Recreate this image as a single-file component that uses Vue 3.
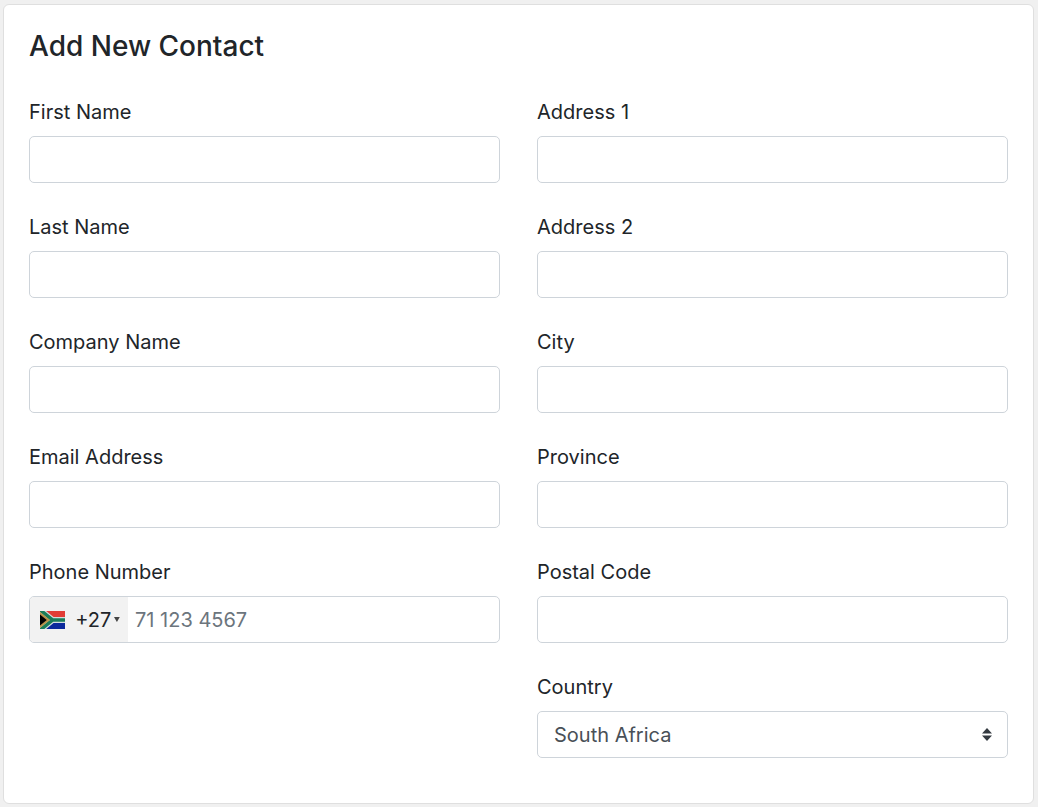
<script setup>
import { reactive } from 'vue'

const columns = [
  [
    { id: 'first-name', label: 'First Name' },
    { id: 'last-name', label: 'Last Name' },
    { id: 'company', label: 'Company Name' },
    { id: 'email', label: 'Email Address', type: 'email' },
    { id: 'phone', label: 'Phone Number', type: 'phone' },
  ],
  [
    { id: 'address-1', label: 'Address 1' },
    { id: 'address-2', label: 'Address 2' },
    { id: 'city', label: 'City' },
    { id: 'province', label: 'Province' },
    { id: 'postal-code', label: 'Postal Code' },
    { id: 'country', label: 'Country', type: 'country' },
  ],
]

const form = reactive({ country: 'South Africa' })
</script>

<template>
  <main class="page">
    <form class="card" @submit.prevent>
      <h1 class="title">Add New Contact</h1>
      <div class="columns">
        <div v-for="(fields, i) in columns" :key="i" class="column">
          <div v-for="field in fields" :key="field.id" class="field">
            <label class="label" :for="field.id">{{ field.label }}</label>

            <div v-if="field.type === 'phone'" class="control phone">
              <button class="dial" type="button" aria-label="Country code: South Africa +27">
                <svg class="flag" viewBox="0 0 26 18" preserveAspectRatio="none" aria-hidden="true">
                  <rect width="26" height="9" fill="#e23d36" />
                  <rect y="9" width="26" height="9" fill="#0c2a9c" />
                  <path d="M-1 -2 L13 9 L-1 20 M13 9 H28" fill="none" stroke="#d3dcdc" stroke-width="6" />
                  <path d="M-1 -2 L13 9 L-1 20 M13 9 H28" fill="none" stroke="#1b7d59" stroke-width="3.6" />
                  <path d="M0 1 L10.4 9 L0 17 Z" fill="#b9924a" />
                  <path d="M0 3.6 L7 9 L0 14.4 Z" fill="#000" />
                </svg>
                <span class="code">+27</span>
                <svg class="caret" viewBox="0 0 6 5" aria-hidden="true">
                  <path d="M0 0 H6 L3 5 Z" fill="#444" />
                </svg>
              </button>
              <input :id="field.id" v-model="form[field.id]" class="number" type="tel" placeholder="71 123 4567" />
            </div>

            <div v-else-if="field.type === 'country'" class="select-wrap">
              <select :id="field.id" v-model="form.country" class="control select">
                <option>South Africa</option>
              </select>
              <svg class="arrows" viewBox="0 0 10 13" aria-hidden="true">
                <path d="M5 0 L10 5.5 H0 Z M0 7.5 H10 L5 13 Z" fill="#343a40" />
              </svg>
            </div>

            <input v-else :id="field.id" v-model="form[field.id]" class="control input" :type="field.type || 'text'" />
          </div>
        </div>
      </div>
    </form>
  </main>
</template>

<style>
body {
  background: #f0f0f0;
}
</style>

<style scoped>
.page,
.page * {
  box-sizing: border-box;
}

.page {
  padding: 4px 4px 3px 3px;
  color: #212529;
  font-family: Inter, "Liberation Sans", sans-serif;
  font-size: 20px;
  line-height: 30px;
}

.card {
  padding: 25px 25px 16px;
  border: 1px solid #dfdfdf;
  border-radius: 6px;
  background: #fff;
}

.title {
  margin: 0 0 35px;
  font-size: 28px;
  font-weight: 500;
  line-height: 32px;
}

.columns {
  display: grid;
  grid-template-columns: 1fr 1fr;
  gap: 37px;
}

.field {
  margin-bottom: 29px;
}

.label {
  display: block;
  margin-bottom: 9px;
}

.control {
  display: block;
  width: 100%;
  height: 47px;
  border: 1px solid #ced4da;
  border-radius: 5px;
  background: #fff;
  color: #495057;
  font: inherit;
}

.input {
  padding: 0 16px;
}

.control:focus-visible,
.phone:focus-within {
  border-color: #80bdff;
  outline: none;
}

.phone {
  display: flex;
  overflow: hidden;
}

.dial {
  display: flex;
  flex: none;
  align-items: center;
  width: 98px;
  padding: 0 8px 0 10px;
  border: 0;
  background: #f2f2f2;
  color: #212529;
  font: inherit;
}

.flag {
  width: 26px;
  height: 18px;
}

.code {
  margin-left: 10px;
}

.caret {
  width: 6px;
  height: 5px;
  margin-left: 3px;
}

.number {
  flex: 1;
  min-width: 0;
  padding: 0 7px;
  border: 0;
  outline: none;
  background: transparent;
  color: #495057;
  font: inherit;
}

.number::placeholder {
  color: #6c757d;
  opacity: 1;
}

.select-wrap {
  position: relative;
}

.select {
  padding: 0 40px 0 16px;
  appearance: none;
}

.arrows {
  position: absolute;
  top: 17px;
  right: 16px;
  width: 10px;
  height: 13px;
  pointer-events: none;
}
</style>
